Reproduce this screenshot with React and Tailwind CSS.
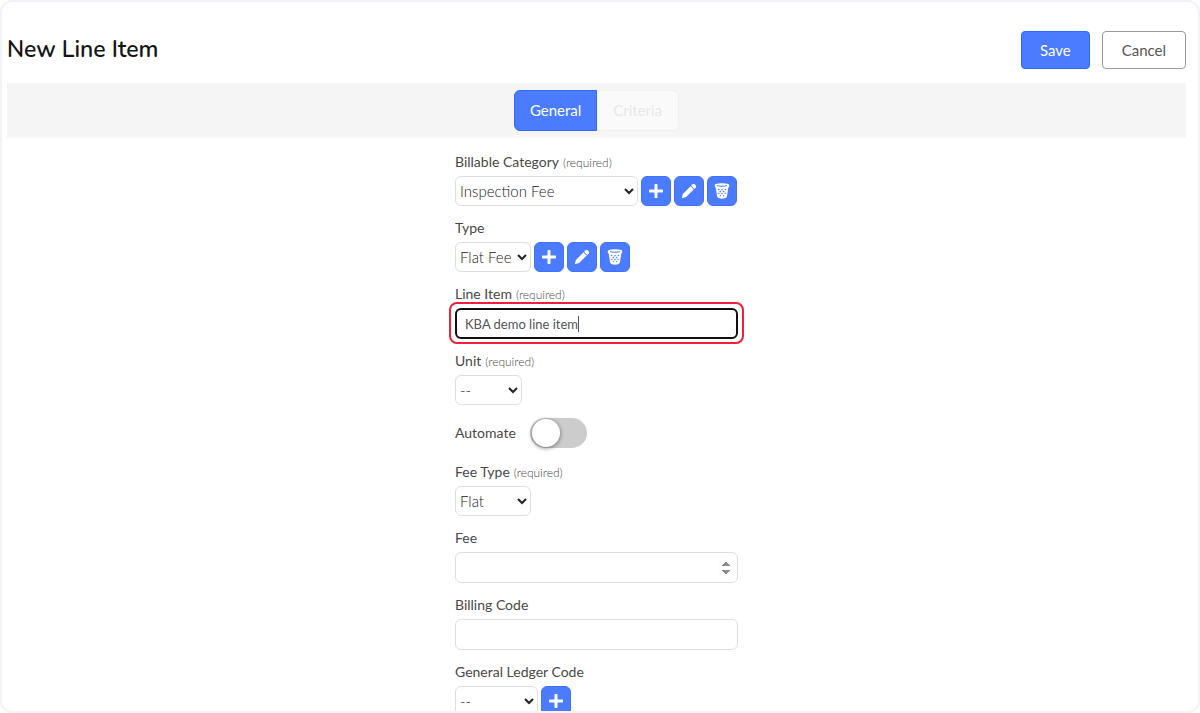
import { useState } from 'react';
import { FaPlus } from 'react-icons/fa';

const controlClass = 'border border-[#dedede] rounded-md bg-white text-[#222]';

function PencilIcon() {
  return (
    <svg viewBox="0 0 16 16" className="w-4 h-4" fill="currentColor" aria-hidden="true">
      <path d="M11.6 1.2a1.3 1.3 0 0 1 1.8 0l1.4 1.4a1.3 1.3 0 0 1 0 1.8l-1.5 1.5-3.2-3.2z" />
      <path d="M9.5 3.3l3.2 3.2-7.6 7.6-4.3 1.1 1.1-4.3z" />
    </svg>
  );
}

function BinIcon() {
  return (
    <svg viewBox="0 0 16 16" className="w-4 h-4" aria-hidden="true">
      <path
        d="M0.8 2C0.8 1 4 0.3 8 0.3s7.2 0.7 7.2 1.7v1.4c0 0.5-0.4 0.9-0.9 1l-1.3 8.8c-0.3 1.6-2.3 2.5-5 2.5s-4.7-0.9-5-2.5L1.7 4.4c-0.5-0.1-0.9-0.5-0.9-1z"
        fill="currentColor"
      />
      <path d="M3 2.6c2.8 0.9 7.2 0.9 10 0" stroke="#4b7bff" strokeWidth="1" fill="none" />
      <g fill="#4b7bff">
        <circle cx="4.6" cy="6.5" r="0.8" />
        <circle cx="8" cy="6.8" r="0.8" />
        <circle cx="11.4" cy="6.5" r="0.8" />
        <circle cx="6.3" cy="8.6" r="0.8" />
        <circle cx="9.7" cy="8.6" r="0.8" />
        <circle cx="4.9" cy="10.5" r="0.7" />
        <circle cx="8" cy="10.6" r="0.8" />
        <circle cx="11.1" cy="10.5" r="0.7" />
        <circle cx="6.4" cy="12.6" r="0.7" />
        <circle cx="9.6" cy="12.6" r="0.7" />
      </g>
    </svg>
  );
}

function IconButton({ label, children }) {
  return (
    <button
      type="button"
      aria-label={label}
      className="flex items-center justify-center w-[30px] h-[30px] rounded-md border border-[#3f72ff] bg-[#4b7bff] text-white hover:bg-blue-600"
    >
      {children}
    </button>
  );
}

function Field({ id, label, required, children }) {
  return (
    <div>
      <label htmlFor={id} className="block mb-0.5 text-sm/6">
        {label}
        {required && <span className="ml-1 text-xs font-light">(required)</span>}
      </label>
      <div className="flex gap-[3px]">{children}</div>
    </div>
  );
}

function Select({ id, className, options }) {
  return (
    <select id={id} className={`${controlClass} h-[30px] text-[15px] font-light ${className}`}>
      {options.map((option) => (
        <option key={option}>{option}</option>
      ))}
    </select>
  );
}

export default function App() {
  const [lineItem, setLineItem] = useState('KBA demo line item');
  const [automate, setAutomate] = useState(false);

  return (
    <div className="h-screen overflow-hidden border-2 border-[#f3f3fa] rounded-xl bg-white pl-[5px] pr-3 font-['Lato',sans-serif] text-[#484848]">
      <header className="flex items-center justify-between pt-[29px] pb-3.5">
        <h1 className="text-[23px] leading-8 font-semibold text-[#151515] font-['Nunito','Lato',sans-serif]">
          New Line Item
        </h1>
        <div className="flex gap-3">
          <button
            type="button"
            className="h-[38px] px-[18px] rounded-sm border border-[#2f68ff] bg-[#4b7bff] text-[15px] text-white"
          >
            Save
          </button>
          <button
            type="button"
            className="h-[38px] px-[19px] rounded-sm border border-[#999] bg-white text-[15px] text-[#555]"
          >
            Cancel
          </button>
        </div>
      </header>

      <nav className="flex justify-center bg-[#f5f5f5] py-[7px]">
        <button
          type="button"
          className="h-[41px] px-[15px] rounded-l-md border border-[#2f68ff] bg-[#4b7bff] text-[15px] text-white"
        >
          General
        </button>
        <button
          type="button"
          disabled
          className="h-[41px] px-4 rounded-r-md border border-l-0 border-[#f0f0f0] bg-[#fafafa] text-[15px] text-[#e8e8e8]"
        >
          Criteria
        </button>
      </nav>

      <form className="flex flex-col gap-2.5 w-[283px] mx-auto pt-3">
        <Field id="category" label="Billable Category" required>
          <Select id="category" className="w-[183px]" options={['Inspection Fee']} />
          <IconButton label="Add category"><FaPlus /></IconButton>
          <IconButton label="Edit category"><PencilIcon /></IconButton>
          <IconButton label="Delete category"><BinIcon /></IconButton>
        </Field>

        <Field id="type" label="Type">
          <Select id="type" className="w-[76px]" options={['Flat Fee']} />
          <IconButton label="Add type"><FaPlus /></IconButton>
          <IconButton label="Edit type"><PencilIcon /></IconButton>
          <IconButton label="Delete type"><BinIcon /></IconButton>
        </Field>

        <Field id="line-item" label="Line Item" required>
          <div className="relative w-full">
            <input
              id="line-item"
              type="text"
              value={lineItem}
              onChange={(e) => setLineItem(e.target.value)}
              className="block w-full h-[31px] px-2 border-2 border-[#101010] rounded-md bg-white text-[13px] text-[#555] outline-none"
            />
            {/* highlight ring around the active field */}
            <div className="absolute -inset-x-1.5 -top-1.5 -bottom-[5px] border-2 border-[#f0203c] rounded-lg pointer-events-none" />
            <span className="absolute left-[123px] top-2 w-px h-4 bg-[#555] pointer-events-none" />
          </div>
        </Field>

        <Field id="unit" label="Unit" required>
          <Select id="unit" className="w-[67px]" options={['--']} />
        </Field>

        <label className="flex items-center gap-3.5 h-[35px] text-sm">
          Automate
          <span className="relative w-[57px] h-[30px]">
            <input
              type="checkbox"
              checked={automate}
              onChange={(e) => setAutomate(e.target.checked)}
              className="peer block w-full h-full appearance-none rounded-full bg-[#ccc] checked:bg-[#4b7bff]"
            />
            <span className="absolute top-px left-0.5 w-7 h-7 rounded-full bg-white shadow-[0_1px_4px_rgba(0,0,0,0.5)] pointer-events-none peer-checked:left-[27px]" />
          </span>
        </label>

        <Field id="fee-type" label="Fee Type" required>
          <Select id="fee-type" className="w-[76px]" options={['Flat']} />
        </Field>

        <Field id="fee" label="Fee">
          <input
            id="fee"
            type="number"
            className={`${controlClass} w-full h-[31px] pl-2 pr-[3px] text-[13px] [&::-webkit-inner-spin-button]:opacity-100`}
          />
        </Field>

        <Field id="billing-code" label="Billing Code">
          <input id="billing-code" type="text" className={`${controlClass} w-full h-[31px] px-2 text-[13px]`} />
        </Field>

        <Field id="ledger-code" label="General Ledger Code">
          <Select id="ledger-code" className="w-[83px]" options={['--']} />
          <IconButton label="Add ledger code"><FaPlus /></IconButton>
        </Field>
      </form>
    </div>
  );
}
